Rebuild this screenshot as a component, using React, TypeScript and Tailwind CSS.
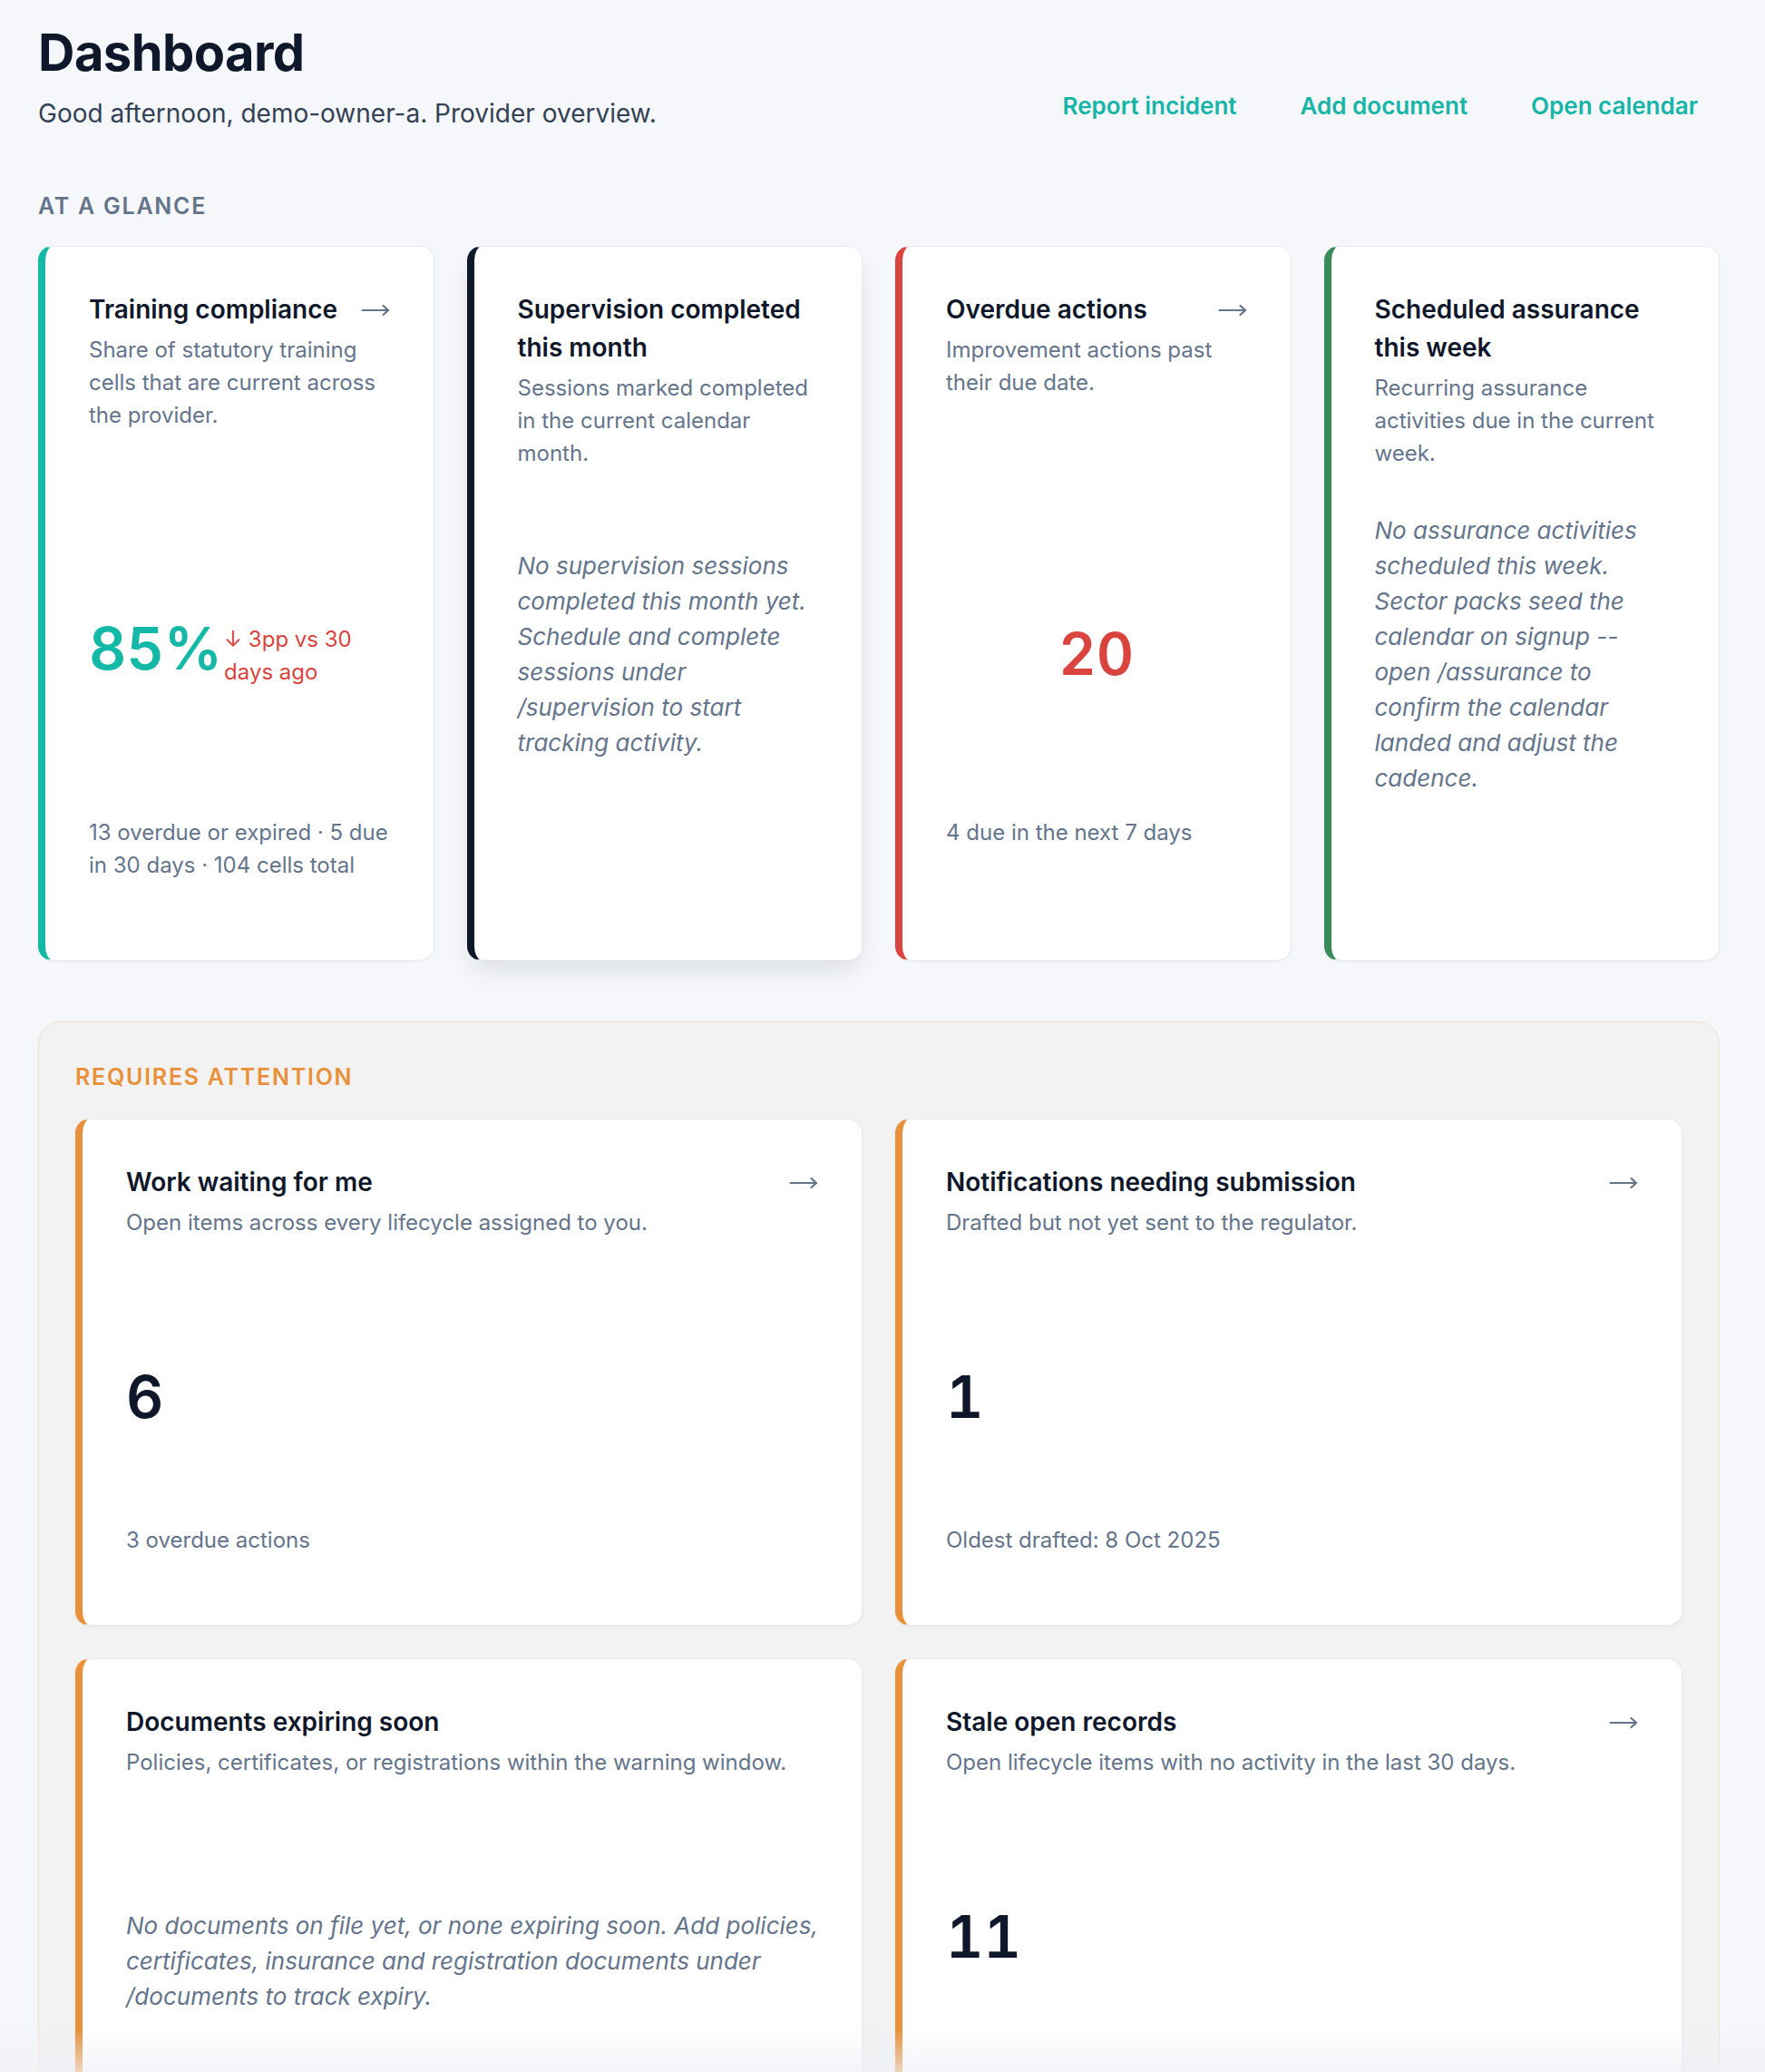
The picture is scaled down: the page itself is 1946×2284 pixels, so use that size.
import React from "react";

type Tone = "teal" | "navy" | "red" | "green" | "orange";

const edgeColour: Record<Tone, string> = {
  teal: "border-l-[#14b8a6]",
  navy: "border-l-[#0f172a]",
  red: "border-l-[#d9443f]",
  green: "border-l-[#3a8a5c]",
  orange: "border-l-[#e8913a]",
};

function Arrow() {
  return (
    <svg
      viewBox="0 0 32 14"
      className="mt-[15px] h-[14px] w-[32px] shrink-0 text-[#64748b]"
      fill="none"
      stroke="currentColor"
      strokeWidth="2.2"
      strokeLinecap="round"
      strokeLinejoin="round"
    >
      <line x1="1.5" y1="7" x2="30" y2="7" />
      <polyline points="24.5,2 30,7 24.5,12" />
    </svg>
  );
}

function CardHeader({ title, desc, arrow }: { title: string; desc: string; arrow?: boolean }) {
  return (
    <div>
      <div className="flex items-start justify-between gap-[16px]">
        <h3 className="text-[28px] leading-[42px] font-semibold text-[#0f172a]">{title}</h3>
        {arrow && <Arrow />}
      </div>
      <p className="mt-[6px] text-[24px] leading-[36px] text-[#64748b]">{desc}</p>
    </div>
  );
}

function EmptyNote({ children, width }: { children: React.ReactNode; width: string }) {
  return <p className={`${width} text-[26px] leading-[39px] italic text-[#64748b]`}>{children}</p>;
}

function BigNumber({ value, colour }: { value: string; colour: string }) {
  return <div className={`text-[64px] leading-none font-semibold tabular-nums ${colour}`}>{value}</div>;
}

function GlanceCard({
  tone,
  title,
  desc,
  arrow,
  centred,
  raised,
  footer,
  children,
}: {
  tone: Tone;
  title: string;
  desc: string;
  arrow?: boolean;
  centred?: boolean;
  raised?: boolean;
  footer?: string;
  children: React.ReactNode;
}) {
  return (
    <div
      className={`flex h-[788px] flex-col rounded-[16px] border border-[#e8ebf0] border-l-[8px] ${edgeColour[tone]} bg-white px-[48px] pt-[48px] ${
        raised ? "shadow-[0_14px_28px_-6px_rgba(15,23,42,0.12)]" : "shadow-[0_1px_3px_rgba(15,23,42,0.05)]"
      }`}
    >
      <div className="h-[200px] shrink-0">
        <CardHeader title={title} desc={desc} arrow={arrow} />
      </div>
      <div className={`flex h-[380px] shrink-0 items-center pt-[22px] ${centred ? "justify-center" : ""}`}>{children}</div>
      {footer && <p className="text-[24px] leading-[36px] text-[#64748b]">{footer}</p>}
    </div>
  );
}

function AttentionCard({
  title,
  desc,
  arrow,
  footer,
  children,
}: {
  title: string;
  desc: string;
  arrow?: boolean;
  footer?: string;
  children: React.ReactNode;
}) {
  return (
    <div className="flex h-[559px] flex-col rounded-[16px] border border-[#e8ebf0] border-l-[8px] border-l-[#e8913a] bg-white px-[48px] pt-[48px] shadow-[0_1px_3px_rgba(15,23,42,0.05)]">
      <CardHeader title={title} desc={desc} arrow={arrow} />
      <div className="h-[314px] shrink-0 pt-[142px]">{children}</div>
      {footer && <p className="text-[24px] leading-[36px] text-[#64748b]">{footer}</p>}
    </div>
  );
}

const quickLinks = ["Report incident", "Add document", "Open calendar"];

export default function App() {
  return (
    <div className="min-h-screen bg-[#f5f7fa] font-[family-name:Inter,sans-serif] text-[#0f172a]">
      <main className="pb-[80px] pl-[42px] pr-[50px] pt-[30px]">
        <header className="flex items-end justify-between">
          <div>
            <h1 className="text-[56px] leading-none font-bold tracking-[-0.01em] text-[#0f172a]">Dashboard</h1>
            <p className="mt-[19px] text-[28px] leading-[40px] text-[#334155]">
              Good afternoon, demo-owner-a. Provider overview.
            </p>
          </div>
          <nav className="flex gap-[22px]">
            {quickLinks.map((label) => (
              <a
                key={label}
                href="#"
                className="px-[24px] py-[8px] text-[26px] leading-[40px] font-semibold text-[#17b5a7]"
              >
                {label}
              </a>
            ))}
          </nav>
        </header>

        <section className="mt-[63px]">
          <h2 className="text-[25px] leading-[38px] font-semibold uppercase tracking-[0.07em] text-[#64748b]">
            At a glance
          </h2>
          <div className="mt-[25px] grid grid-cols-4 gap-[36px]">
            <GlanceCard
              tone="teal"
              title="Training compliance"
              desc="Share of statutory training cells that are current across the provider."
              arrow
              footer="13 overdue or expired · 5 due in 30 days · 104 cells total"
            >
              <div className="flex items-start gap-[2px]">
                <span className="text-[64px] leading-none font-semibold tabular-nums text-[#14b8a6]">85%</span>
                <span className="mt-[4px] max-w-[160px] text-[24px] leading-[36px] text-[#d9443f]">
                  ↓ 3pp vs 30 days ago
                </span>
              </div>
            </GlanceCard>
            <GlanceCard
              tone="navy"
              title="Supervision completed this month"
              desc="Sessions marked completed in the current calendar month."
              raised
            >
              <EmptyNote width="max-w-[325px]">
                No supervision sessions completed this month yet. Schedule and complete sessions under
                /supervision to start tracking activity.
              </EmptyNote>
            </GlanceCard>
            <GlanceCard
              tone="red"
              title="Overdue actions"
              desc="Improvement actions past their due date."
              arrow
              centred
              footer="4 due in the next 7 days"
            >
              <BigNumber value="20" colour="text-[#d9443f]" />
            </GlanceCard>
            <GlanceCard
              tone="green"
              title="Scheduled assurance this week"
              desc="Recurring assurance activities due in the current week."
            >
              <EmptyNote width="max-w-[315px]">
                No assurance activities scheduled this week. Sector packs seed the calendar on signup -- open
                /assurance to confirm the calendar landed and adjust the cadence.
              </EmptyNote>
            </GlanceCard>
          </div>
        </section>

        <section className="mt-[67px] rounded-[24px] border border-[#f5e0c9] bg-[#f2f2f3] px-[40px] pb-[40px] pt-[41px]">
          <h2 className="text-[25px] leading-[38px] font-semibold uppercase tracking-[0.07em] text-[#e8913a]">
            Requires attention
          </h2>
          <div className="mt-[27px] grid grid-cols-2 gap-[36px]">
            <AttentionCard
              title="Work waiting for me"
              desc="Open items across every lifecycle assigned to you."
              arrow
              footer="3 overdue actions"
            >
              <BigNumber value="6" colour="text-[#0f172a]" />
            </AttentionCard>
            <AttentionCard
              title="Notifications needing submission"
              desc="Drafted but not yet sent to the regulator."
              arrow
              footer="Oldest drafted: 8 Oct 2025"
            >
              <BigNumber value="1" colour="text-[#0f172a]" />
            </AttentionCard>
            <AttentionCard
              title="Documents expiring soon"
              desc="Policies, certificates, or registrations within the warning window."
            >
              <EmptyNote width="w-[790px]">
                No documents on file yet, or none expiring soon. Add policies, certificates, insurance and
                registration documents under /documents to track expiry.
              </EmptyNote>
            </AttentionCard>
            <AttentionCard
              title="Stale open records"
              desc="Open lifecycle items with no activity in the last 30 days."
              arrow
            >
              <BigNumber value="11" colour="text-[#0f172a]" />
            </AttentionCard>
          </div>
        </section>
      </main>
      <div className="pointer-events-none fixed inset-x-0 bottom-0 h-[48px] bg-linear-to-b from-transparent to-[#eef0f4]/70" />
    </div>
  );
}
